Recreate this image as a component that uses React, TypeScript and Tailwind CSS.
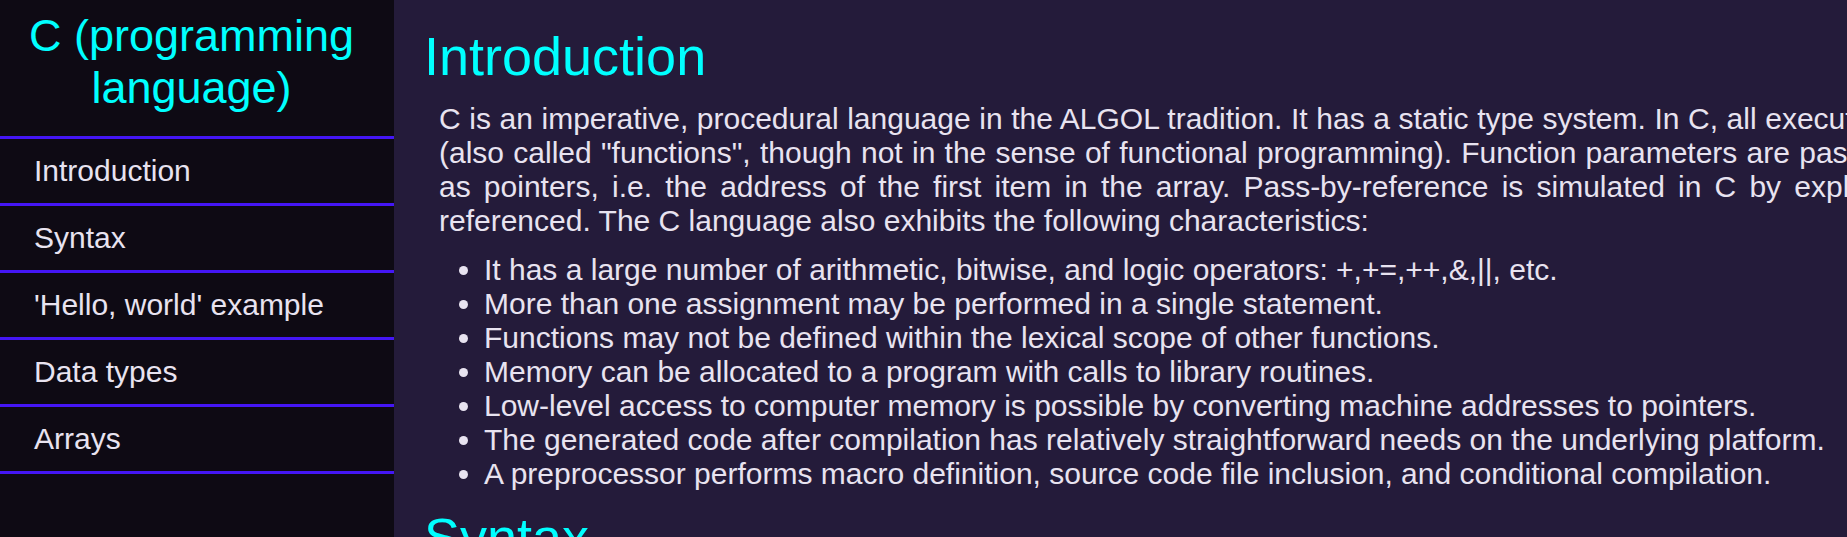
const sections = ["Introduction", "Syntax", "'Hello, world' example", "Data types", "Arrays"];

const traits = [
  "It has a large number of arithmetic, bitwise, and logic operators: +,+=,++,&,||, etc.",
  "More than one assignment may be performed in a single statement.",
  "Functions may not be defined within the lexical scope of other functions.",
  "Memory can be allocated to a program with calls to library routines.",
  "Low-level access to computer memory is possible by converting machine addresses to pointers.",
  "The generated code after compilation has relatively straightforward needs on the underlying platform.",
  "A preprocessor performs macro definition, source code file inclusion, and conditional compilation.",
];

const slug = (name: string) => name.replace(/[^A-Za-z]+/g, "_");

function Heading({ children }: { children: string }) {
  return <h2 className="text-[54px] leading-[62px] text-[#00ffff]">{children}</h2>;
}

export default function App() {
  return (
    <div className="flex h-screen overflow-hidden bg-[#241b3a] font-['Liberation_Sans',Arial,sans-serif] text-[30px] leading-[34px] text-[#e8e3f0]">
      <nav className="w-[394px] shrink-0 bg-[#0e0a14]">
        <h1 className="px-3 pt-[10px] pr-[23px] pb-[22px] text-center text-[45px] leading-[52px] text-[#00ffff]">
          C (programming language)
        </h1>
        <ul className="border-t-[3px] border-[#4416f5]">
          {sections.map((name) => (
            <li key={name} className="border-b-[3px] border-[#4416f5]">
              <a href={`#${slug(name)}`} className="block px-[34px] py-[15px]">
                {name}
              </a>
            </li>
          ))}
        </ul>
      </nav>
      <main className="min-w-0 flex-1 overflow-hidden pt-[25px] pl-[30px]">
        <section id="Introduction" className="w-[139%]">
          <Heading>Introduction</Heading>
          <p className="mt-[15px] ml-[15px] text-justify">
            C is an imperative, procedural language in the ALGOL tradition. It has a static type system. In C, all
            executable code is contained within subroutines (also called "functions", though not in the sense of
            functional programming). Function parameters are passed by value, although arrays are passed as pointers,
            i.e. the address of the first item in the array. Pass-by-reference is simulated in C by explicitly passing
            pointers to the thing being referenced. The C language also exhibits the following characteristics:
          </p>
          <ul className="mt-[15px] ml-[60px] list-disc">
            {traits.map((trait) => (
              <li key={trait}>{trait}</li>
            ))}
          </ul>
        </section>
        <section id="Syntax" className="mt-[15px]">
          <Heading>Syntax</Heading>
        </section>
      </main>
    </div>
  );
}
